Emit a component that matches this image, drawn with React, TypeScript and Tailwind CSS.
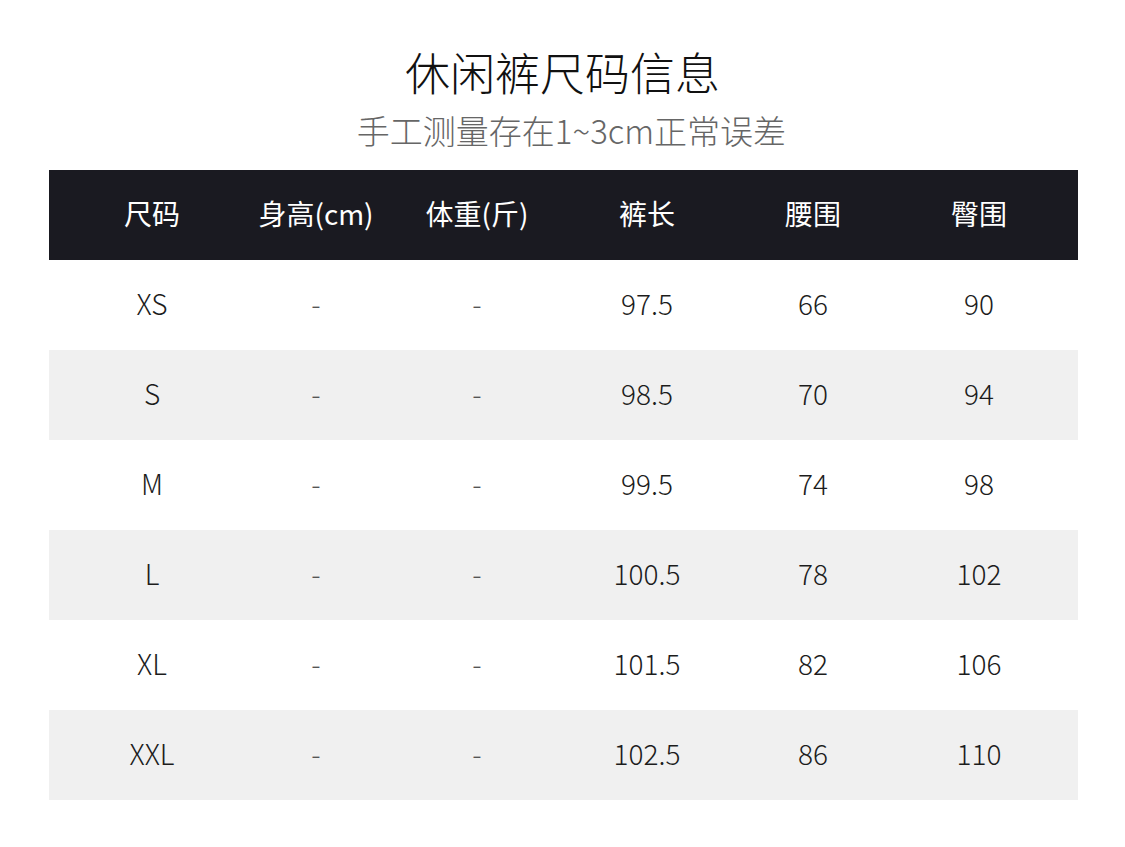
const font = "font-['Noto_Sans_CJK_SC','Noto_Sans',sans-serif]";

const headers = ["尺码", "身高(cm)", "体重(斤)", "裤长", "腰围", "臀围"];

const rows = [
  ["XS", "-", "-", "97.5", "66", "90"],
  ["S", "-", "-", "98.5", "70", "94"],
  ["M", "-", "-", "99.5", "74", "98"],
  ["L", "-", "-", "100.5", "78", "102"],
  ["XL", "-", "-", "101.5", "82", "106"],
  ["XXL", "-", "-", "102.5", "86", "110"],
];

const cols = "grid grid-cols-[164px_164px_158px_182px_150px_182px] pl-[21px]";

export default function App() {
  return (
    <div className={`w-[1125px] h-[847px] bg-white ${font} font-light flex flex-col`}>
      <h1 className="mt-[44px] text-center text-[45px] leading-[56px] font-light text-[#111]">
        休闲裤尺码信息
      </h1>
      <p className="mt-[8px] pl-[18px] text-center text-[33px] leading-[44px] text-[#666]">
        手工测量存在1~3cm正常误差
      </p>

      <div className="mt-[18px] ml-[49px] w-[1029px]">
        <div className={`${cols} h-[90px] items-center pb-[5px] bg-[#1a1a21] text-white text-[28px] font-normal`}>
          {headers.map((h) => (
            <div key={h} className="text-center">
              {h}
            </div>
          ))}
        </div>
        {rows.map((r, i) => (
          <div
            key={r[0]}
            className={`${cols} h-[90px] items-center pb-[4px] text-[28px] text-[#1c1c1c] ${
              i % 2 === 1 ? "bg-[#f0f0f0]" : "bg-white"
            }`}
          >
            {r.map((c, j) => (
              <div key={j} className={`text-center ${c === "-" ? "text-[#555]" : ""}`}>
                {c}
              </div>
            ))}
          </div>
        ))}
      </div>
    </div>
  );
}
